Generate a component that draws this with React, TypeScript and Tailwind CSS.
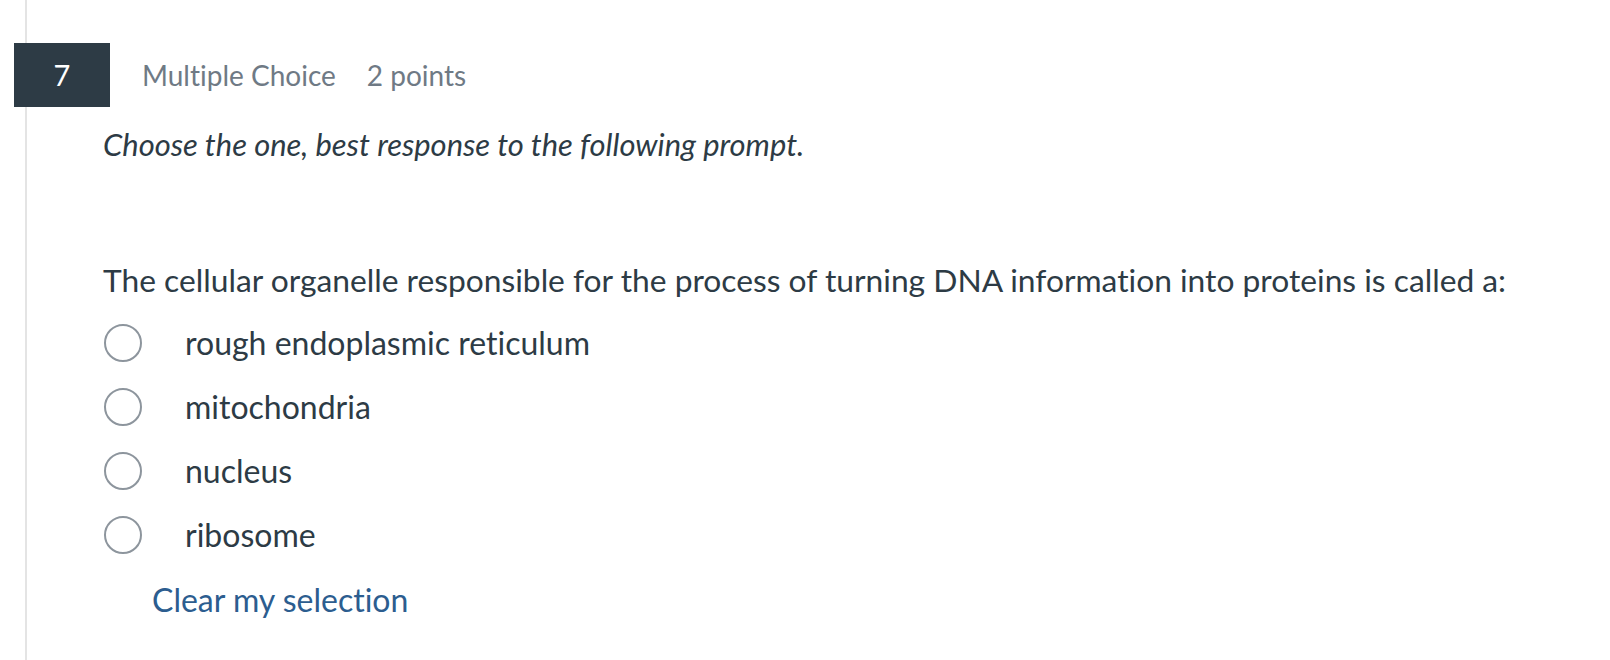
export default function App() {
  const options = ['rough endoplasmic reticulum', 'mitochondria', 'nucleus', 'ribosome'];

  return (
    <div className="h-[660px] w-[1610px] overflow-hidden bg-white font-['Lato','Liberation_Sans',sans-serif] text-[#2d3b45] [font-variant-ligatures:none]">
      <div className="ml-[25px] h-full border-l-2 border-[#e4e4e4] pt-[43px]">
        <div className="-ml-[13px] flex items-center">
          <div className="flex h-[64px] w-[96px] items-center justify-center bg-[#2d3b45] text-[29px] text-white">7</div>
          <span className="ml-[32px] text-[28px] text-[#6f7a85]">Multiple Choice</span>
          <span className="ml-[31px] text-[28px] text-[#6f7a85]">2 points</span>
        </div>

        <div className="pl-[76px]">
          <p className="mt-[18px] text-[30.9px] italic leading-[40px]">Choose the one, best response to the following prompt.</p>
          <p className="mt-[95px] text-[31.75px] leading-[40px]">
            The cellular organelle responsible for the process of turning DNA information into proteins is called a:
          </p>

          <div className="mt-[11px] flex flex-col">
            {options.map((o) => (
              <label key={o} className="flex h-[64px] items-center">
                <span className="ml-[1px] h-[38px] w-[38px] shrink-0 rounded-full border-2 border-[#8d959d] bg-white" />
                <span className="ml-[43px] text-[32px]">{o}</span>
              </label>
            ))}
          </div>

          <button className="ml-[49px] mt-[13px] block text-[32px] leading-[40px] text-[#2c5d8f]">Clear my selection</button>
        </div>
      </div>
    </div>
  );
}
